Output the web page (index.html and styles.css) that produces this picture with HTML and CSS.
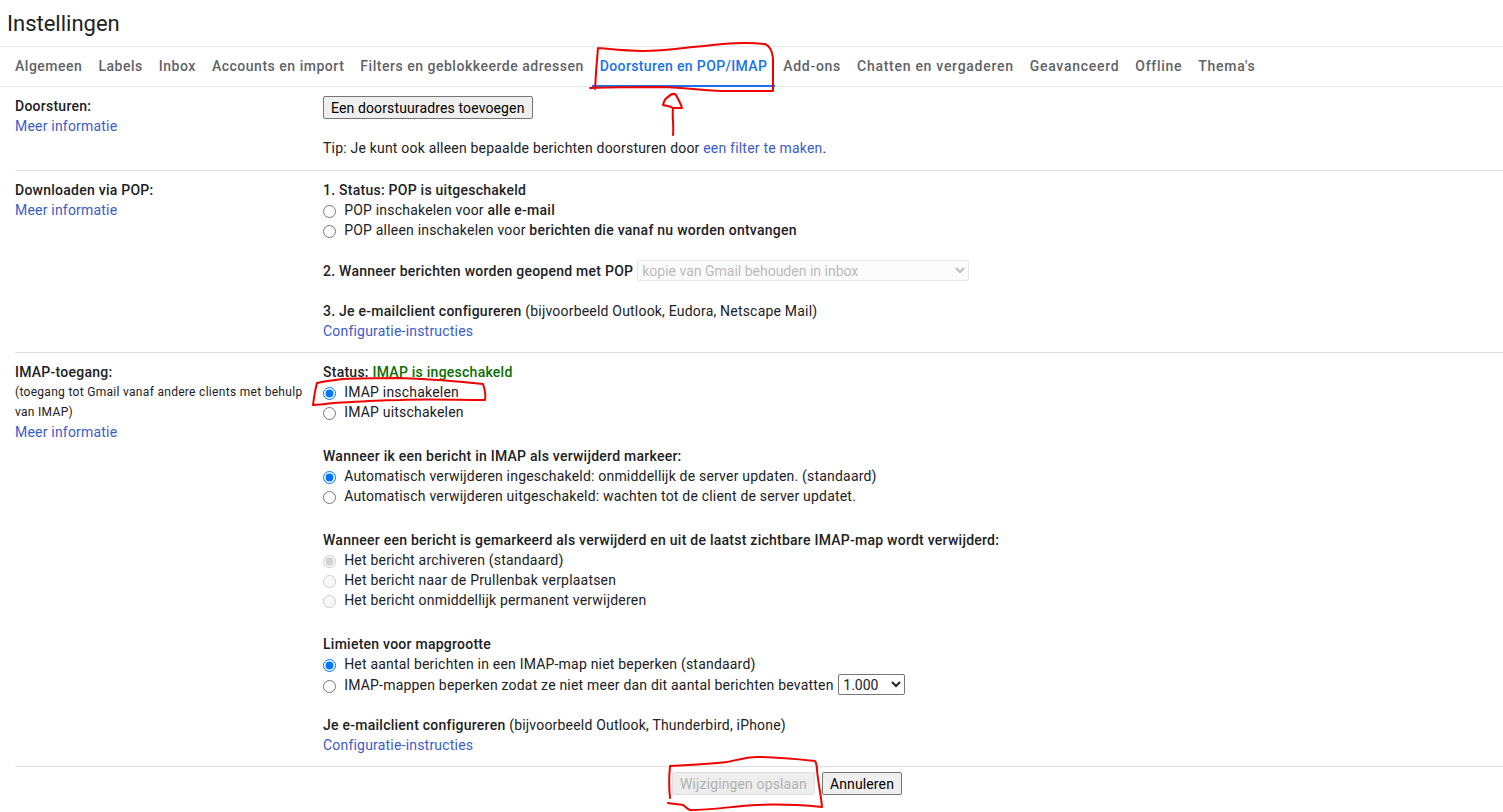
FILE: index.html
```html
<!DOCTYPE html>
<html lang="nl">
<head>
  <meta charset="UTF-8" />
  <meta name="viewport" content="width=device-width, initial-scale=1.0"/>
  <title>Instellingen</title>
  <link rel="stylesheet" href="styles.css">
</head>
<body>

  <h1 class="page-title">Instellingen</h1>

  <!-- Tabs -->
  <nav class="tabs">
    <a class="tab">Algemeen</a>
    <a class="tab">Labels</a>
    <a class="tab">Inbox</a>
    <a class="tab">Accounts en import</a>
    <a class="tab">Filters en geblokkeerde adressen</a>
    <a class="tab active">Doorsturen en POP/IMAP</a>
    <a class="tab">Add-ons</a>
    <a class="tab">Chatten en vergaderen</a>
    <a class="tab">Geavanceerd</a>
    <a class="tab">Offline</a>
    <a class="tab">Thema's</a>
  </nav>

  <!-- Doorsturen -->
  <section class="setting setting-forward">
    <div class="setting-label">
      <div class="line"><b>Doorsturen:</b></div>
      <div class="line"><a class="link">Meer informatie</a></div>
    </div>
    <div class="setting-body">
      <button class="btn">Een doorstuuradres toevoegen</button>
      <div class="line tip">Tip: Je kunt ook alleen bepaalde berichten doorsturen door <a class="link">een filter te maken</a>.</div>
    </div>
  </section>

  <!-- POP -->
  <section class="setting">
    <div class="setting-label">
      <div class="line"><b>Downloaden via POP:</b></div>
      <div class="line"><a class="link">Meer informatie</a></div>
    </div>
    <div class="setting-body">
      <div class="group">
        <div class="line"><b>1. Status: POP is uitgeschakeld</b></div>
        <label class="line option"><input type="radio" name="pop"> <span>POP inschakelen voor <b>alle e-mail</b></span></label>
        <label class="line option"><input type="radio" name="pop"> <span>POP alleen inschakelen voor <b>berichten die vanaf nu worden ontvangen</b></span></label>
      </div>
      <div class="group select-line">
        <b>2. Wanneer berichten worden geopend met POP</b>
        <select class="select-wide" disabled><option>kopie van Gmail behouden in inbox</option></select>
      </div>
      <div class="group">
        <div class="line"><b>3. Je e-mailclient configureren</b> (bijvoorbeeld Outlook, Eudora, Netscape Mail)</div>
        <div class="line"><a class="link">Configuratie-instructies</a></div>
      </div>
    </div>
  </section>

  <!-- IMAP -->
  <section class="setting">
    <div class="setting-label">
      <div class="line"><b>IMAP-toegang:</b></div>
      <div class="note">(toegang tot Gmail vanaf andere clients met behulp van IMAP)</div>
      <div class="line"><a class="link">Meer informatie</a></div>
    </div>
    <div class="setting-body">
      <div class="group">
        <div class="line"><b>Status: <span class="status-on">IMAP is ingeschakeld</span></b></div>
        <label class="line option"><input type="radio" name="imap" checked> <span>IMAP inschakelen</span></label>
        <label class="line option"><input type="radio" name="imap"> <span>IMAP uitschakelen</span></label>
      </div>
      <div class="group">
        <div class="line"><b>Wanneer ik een bericht in IMAP als verwijderd markeer:</b></div>
        <label class="line option"><input type="radio" name="expunge" checked> <span>Automatisch verwijderen ingeschakeld: onmiddellijk de server updaten. (standaard)</span></label>
        <label class="line option"><input type="radio" name="expunge"> <span>Automatisch verwijderen uitgeschakeld: wachten tot de client de server updatet.</span></label>
      </div>
      <div class="group">
        <div class="line"><b>Wanneer een bericht is gemarkeerd als verwijderd en uit de laatst zichtbare IMAP-map wordt verwijderd:</b></div>
        <label class="line option"><input type="radio" name="deleted" checked disabled> <span>Het bericht archiveren (standaard)</span></label>
        <label class="line option"><input type="radio" name="deleted" disabled> <span>Het bericht naar de Prullenbak verplaatsen</span></label>
        <label class="line option"><input type="radio" name="deleted" disabled> <span>Het bericht onmiddellijk permanent verwijderen</span></label>
      </div>
      <div class="group group-limit">
        <div class="line"><b>Limieten voor mapgrootte</b></div>
        <label class="line option"><input type="radio" name="limit" checked> <span>Het aantal berichten in een IMAP-map niet beperken (standaard)</span></label>
        <label class="line option"><input type="radio" name="limit"> <span>IMAP-mappen beperken zodat ze niet meer dan dit aantal berichten bevatten</span>
          <select class="select-small"><option>1.000</option></select></label>
      </div>
      <div class="group">
        <div class="line"><b>Je e-mailclient configureren</b> (bijvoorbeeld Outlook, Thunderbird, iPhone)</div>
        <div class="line"><a class="link">Configuratie-instructies</a></div>
      </div>
    </div>
  </section>

  <!-- Save / cancel -->
  <div class="actions">
    <button class="btn" disabled>Wijzigingen opslaan</button>
    <button class="btn">Annuleren</button>
  </div>

  <!-- Red marker scribbles on top of the screenshot -->
  <svg class="scribbles" width="1503" height="812" viewBox="0 0 1503 812" fill="none" stroke="#f00000" stroke-width="2" stroke-linecap="round" stroke-linejoin="round">
    <path d="M598 48 Q596 70 595 89 M590 88 C620 87 640 87 660 87 C690 88 710 91 727 91 L773 91 C773 75 773 65 773 58 C772 50 770 46 765 44 C740 41 715 45 693 47 C675 49 660 51 643 51 C625 51 610 49 598 48"/>
    <path d="M673 135 C674 125 672 118 673 108 M673 108 C670 106 666 106 663 105 C664 101 666 98 668 97 C671 94 674 93 676 95 C678 99 681 104 682 108 C679 108 676 108 673 108"/>
    <path d="M313 405 C314 397 315 390 317 383 C325 381 335 380 343 379 C362 378 381 378 400 378 C428 379 456 381 483 384 C485 390 486 395 485 400 C457 400 428 399 400 400 C378 400 355 402 333 403 C326 404 320 405 313 405"/>
    <path d="M670 798 C669 788 669 776 670 766 C690 765 710 764 727 762 C737 760 747 757 757 757 C776 757 796 759 815 761 C817 764 817 767 817 770 C818 782 821 795 822 807 C800 805 778 804 757 805 C735 806 712 810 690 810 C687 809 685 806 683 805 C678 804 673 804 668 803"/>
  </svg>

</body>
</html>
```

FILE: styles.css
```css
* {
  box-sizing: border-box;
}

body {
  margin: 0;
  width: 1503px;
  height: 812px;
  overflow: hidden;
  position: relative;
  background: #fff;
  color: #202124;
  font-family: Roboto, "Liberation Sans", sans-serif;
  font-size: 14px;
  line-height: 20px;
  letter-spacing: 0.2px;
}

.page-title {
  margin: 0;
  height: 47px;
  padding: 9px 0 0 7px;
  font-size: 22px;
  line-height: 30px;
  font-weight: 400;
  letter-spacing: 0;
  color: #202124;
  border-bottom: 1px solid #e8eaed;
}

/* Tabs */
.tabs {
  display: flex;
  height: 40px;
  padding-left: 7px;
  border-bottom: 1px solid #e8eaed;
}

.tab {
  padding: 9px 8px 0;
  height: 40px;
  font-weight: 500;
  letter-spacing: 0.52px;
  color: #5f6368;
}

.tab.active {
  letter-spacing: 0.36px;
  color: #1a73e8;
  border-bottom: 2px solid #1a73e8;
}

.tab.active ~ .tab {
  letter-spacing: 0.72px;
}

/* Setting rows */
.setting {
  display: flex;
  margin-left: 15px;
  padding: 9px 0 11px;
  border-bottom: 1px solid #e0e0e0;
}

.setting-label {
  width: 308px;
  flex: none;
  padding-right: 15px;
}

.setting-forward {
  padding-bottom: 12px;
}

.setting-body {
  flex: 1;
}

.line {
  display: block;
  height: 20px;
}

.note {
  font-size: 12px;
  line-height: 20px;
  letter-spacing: 0.3px;
}

b {
  font-weight: 500;
  letter-spacing: 0.25px;
  color: #202124;
}

.link {
  color: #3c5bc8;
}

.status-on {
  color: #0b6e00;
}

.tip {
  margin-top: 19px;
}

.group {
  margin-bottom: 24px;
}

.group:last-child {
  margin-bottom: 0;
}

.group-limit {
  margin-bottom: 21px;
}

.option input {
  margin: 0 4.5px 0 0;
  width: 13px;
  height: 13px;
  vertical-align: -3px;
}

.select-line {
  display: flex;
  align-items: center;
  gap: 4px;
  height: 21px;
  margin-top: -4px;
  margin-bottom: 20px;
}

/* Controls */
.btn {
  height: 23px;
  padding: 0 7px;
  font-family: inherit;
  font-size: 14px;
  line-height: 20px;
  letter-spacing: 0.13px;
  color: #000;
  background: #efefef;
  border: 1px solid #767676;
  border-radius: 2px;
}

.btn:disabled {
  color: #b0b0b0;
  background: #eee;
  border-color: #ddd;
}

.select-wide {
  width: 332px;
  height: 21px;
  font-family: inherit;
  font-size: 14px;
  padding: 0;
  color: #9e9e9e;
  background: #fafafa;
  border: 1px solid #ddd;
  border-radius: 2px;
}

.select-small {
  width: 67px;
  height: 21px;
  margin-left: 1px;
  font-family: inherit;
  font-size: 14px;
  color: #202124;
  background: #fff;
  border: 1px solid #767676;
  border-radius: 2px;
}

/* Footer buttons */
.actions {
  display: flex;
  gap: 7px;
  padding: 5px 0 0 672px;
}

.scribbles {
  position: absolute;
  top: 0;
  left: 0;
  pointer-events: none;
}
```
